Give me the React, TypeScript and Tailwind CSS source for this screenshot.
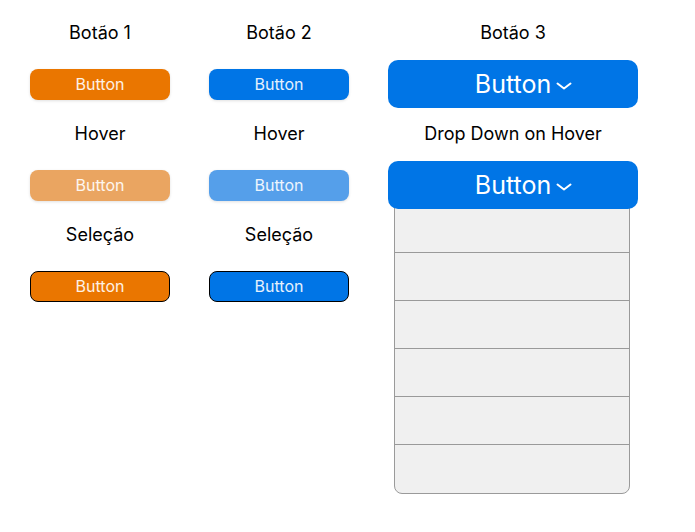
import React from "react";

const font = { fontFamily: "Inter, 'Noto Sans', sans-serif" };

type Variant = "orange" | "orangeHover" | "orangeSel" | "blue" | "blueHover" | "blueSel";

const variantClass: Record<Variant, string> = {
  orange: "bg-[#ea7600] shadow-[0_1px_3px_rgba(0,0,0,0.12)]",
  orangeHover: "bg-[#eaa561] shadow-[0_1px_3px_rgba(0,0,0,0.12)]",
  orangeSel: "bg-[#ea7600] border border-black",
  blue: "bg-[#0075e6] shadow-[0_1px_3px_rgba(0,0,0,0.12)]",
  blueHover: "bg-[#559fea] shadow-[0_1px_3px_rgba(0,0,0,0.12)]",
  blueSel: "bg-[#0075e6] border border-black",
};

const Title: React.FC<{ children: React.ReactNode; className?: string }> = ({ children, className = "" }) => (
  <div className={`h-[20px] leading-[20px] text-[18px] text-black text-center ${className}`}>{children}</div>
);

const SmallButton: React.FC<{ variant: Variant; className?: string }> = ({ variant, className = "" }) => (
  <button
    className={`w-[140px] h-[31px] rounded-[8px] flex items-center justify-center text-[16px] leading-[20px] pb-[1px] text-white/90 ${variantClass[variant]} ${className}`}
  >
    Button
  </button>
);

const Chevron = () => (
  <svg width="16" height="8" viewBox="0 0 16 8" fill="none" className="absolute left-full ml-[5px] top-[13px]">
    <path d="M1.5 1.5 L8 6.5 L14.5 1.5" stroke="white" strokeWidth="2" strokeLinecap="round" strokeLinejoin="round" />
  </svg>
);

const BigButton: React.FC<{ className?: string }> = ({ className = "" }) => (
  <button
    className={`relative z-10 w-[250px] h-[48px] rounded-[10px] bg-[#0075e6] flex items-center justify-center text-[25px] text-white ${className}`}
  >
    <span className="relative leading-[30px]">
      Button
      <Chevron />
    </span>
  </button>
);

export default function App() {
  return (
    <div className="w-[695px] h-[532px] bg-white flex items-start" style={font}>
      {/* Botão 1 */}
      <div className="ml-[30px] w-[140px] pt-[23px] flex flex-col">
        <Title>Botão 1</Title>
        <SmallButton variant="orange" className="mt-[26px]" />
        <Title className="mt-[24px]">Hover</Title>
        <SmallButton variant="orangeHover" className="mt-[26px]" />
        <Title className="mt-[24px]">Seleção</Title>
        <SmallButton variant="orangeSel" className="mt-[26px]" />
      </div>

      {/* Botão 2 */}
      <div className="ml-[39px] w-[140px] pt-[23px] flex flex-col">
        <Title>Botão 2</Title>
        <SmallButton variant="blue" className="mt-[26px]" />
        <Title className="mt-[24px]">Hover</Title>
        <SmallButton variant="blueHover" className="mt-[26px]" />
        <Title className="mt-[24px]">Seleção</Title>
        <SmallButton variant="blueSel" className="mt-[26px]" />
      </div>

      {/* Botão 3 */}
      <div className="ml-[39px] w-[250px] pt-[23px] flex flex-col">
        <Title>Botão 3</Title>
        <BigButton className="mt-[17px]" />
        <Title className="mt-[16px]">Drop Down on Hover</Title>
        <BigButton className="mt-[17px]" />
        <div className="ml-[6px] w-[236px] -mt-[5px] bg-[#f0f0f0] border border-[#9a9a9a] rounded-b-[8px] divide-y divide-[#9a9a9a] flex flex-col">
          {[0, 1, 2, 3, 4, 5].map((i) => (
            <div key={i} className="h-[48px]" />
          ))}
        </div>
      </div>
    </div>
  );
}
